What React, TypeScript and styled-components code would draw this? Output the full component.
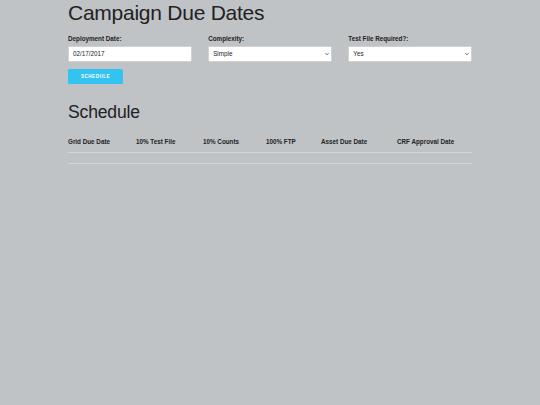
import React, { useState } from "react";
import styled, { createGlobalStyle } from "styled-components";

const GlobalStyle = createGlobalStyle`
  html, body {
    margin: 0;
    padding: 0;
    background: #bfc3c6;
    font-family: "Liberation Sans", Arial, Helvetica, sans-serif;
    color: #222;
  }
`;

const Page = styled.div`
  width: 404px;
  margin: 0 auto;
  min-height: 405px;
`;

const Title = styled.h1`
  margin: 0;
  font-size: 21px;
  line-height: 26px;
  font-weight: 400;
  letter-spacing: -0.25px;
`;

const FormRow = styled.div`
  display: grid;
  grid-template-columns: repeat(3, 1fr);
  column-gap: 16.5px;
  margin-top: 7.5px;
`;

const Field = styled.div`
  display: flex;
  flex-direction: column;
`;

const Label = styled.label`
  font-size: 6.3px;
  line-height: 10px;
  font-weight: 700;
  color: #222;
  margin-bottom: 2.5px;
`;

const TextInput = styled.input`
  box-sizing: border-box;
  display: block;
  height: 15.5px;
  width: 100%;
  margin: 0;
  padding: 0 4px;
  border: 0.5px solid #d1d1d1;
  border-radius: 1.5px;
  background: #fff;
  font-family: inherit;
  font-size: 6.3px;
  color: #222;
  outline: none;
`;

const SelectWrap = styled.div`
  position: relative;
  height: 15.5px;
`;

const Select = styled.select`
  appearance: none;
  box-sizing: border-box;
  display: block;
  height: 15.5px;
  width: 100%;
  margin: 0;
  padding: 0 4px;
  border: 0.5px solid #d1d1d1;
  border-radius: 1.5px;
  background: #fff;
  font-family: inherit;
  font-size: 6.3px;
  color: #222;
  outline: none;
`;

const Chevron = styled.svg`
  position: absolute;
  right: 3px;
  top: 6px;
  width: 4px;
  height: 4px;
  pointer-events: none;
`;

const Button = styled.button`
  box-sizing: border-box;
  display: block;
  width: 55px;
  height: 15px;
  margin-top: 7px;
  padding: 0;
  border: none;
  border-radius: 1.5px;
  background: #33c3f0;
  color: #fff;
  font-family: inherit;
  font-size: 4.6px;
  font-weight: 700;
  letter-spacing: 0.45px;
  text-transform: uppercase;
  cursor: pointer;
`;

const Subtitle = styled.h2`
  margin: 17px 0 0;
  font-size: 17.6px;
  line-height: 22px;
  font-weight: 400;
  letter-spacing: -0.2px;
`;

const Table = styled.table`
  width: 100%;
  margin-top: 9px;
  border-collapse: collapse;
  table-layout: fixed;
`;

const Th = styled.th<{ $w: number }>`
  width: ${({ $w }) => $w}px;
  padding: 5px 0;
  text-align: left;
  font-size: 6.3px;
  line-height: 10px;
  font-weight: 700;
  color: #222;
  white-space: nowrap;
  border-bottom: 1px solid #d3d6d8;
`;

const Td = styled.td`
  padding: 5px 0;
  height: 0;
  border-bottom: 1px solid #d3d6d8;
`;

const columns: Array<[string, number]> = [
  ["Grid Due Date", 68],
  ["10% Test File", 67],
  ["10% Counts", 63],
  ["100% FTP", 55],
  ["Asset Due Date", 76],
  ["CRF Approval Date", 75],
];

const ChevronIcon = () => (
  <Chevron viewBox="0 0 8 8">
    <path d="M1 2.5 L4 5.5 L7 2.5" fill="none" stroke="#333" strokeWidth="1.6" />
  </Chevron>
);

const App: React.FC = () => {
  const [date, setDate] = useState("02/17/2017");
  const [complexity, setComplexity] = useState("Simple");
  const [testFile, setTestFile] = useState("Yes");

  return (
    <Page>
      <GlobalStyle />
      <Title>Campaign Due Dates</Title>
      <FormRow>
        <Field>
          <Label>Deployment Date:</Label>
          <TextInput value={date} onChange={(e) => setDate(e.target.value)} />
        </Field>
        <Field>
          <Label>Complexity:</Label>
          <SelectWrap>
            <Select value={complexity} onChange={(e) => setComplexity(e.target.value)}>
              <option>Simple</option>
              <option>Medium</option>
              <option>Complex</option>
            </Select>
            <ChevronIcon />
          </SelectWrap>
        </Field>
        <Field>
          <Label>Test File Required?:</Label>
          <SelectWrap>
            <Select value={testFile} onChange={(e) => setTestFile(e.target.value)}>
              <option>Yes</option>
              <option>No</option>
            </Select>
            <ChevronIcon />
          </SelectWrap>
        </Field>
      </FormRow>
      <Button>Schedule</Button>
      <Subtitle>Schedule</Subtitle>
      <Table>
        <thead>
          <tr>
            {columns.map(([name, w]) => (
              <Th key={name} $w={w}>
                {name}
              </Th>
            ))}
          </tr>
        </thead>
        <tbody>
          <tr>
            <Td colSpan={6} />
          </tr>
        </tbody>
      </Table>
    </Page>
  );
};

export default App;
